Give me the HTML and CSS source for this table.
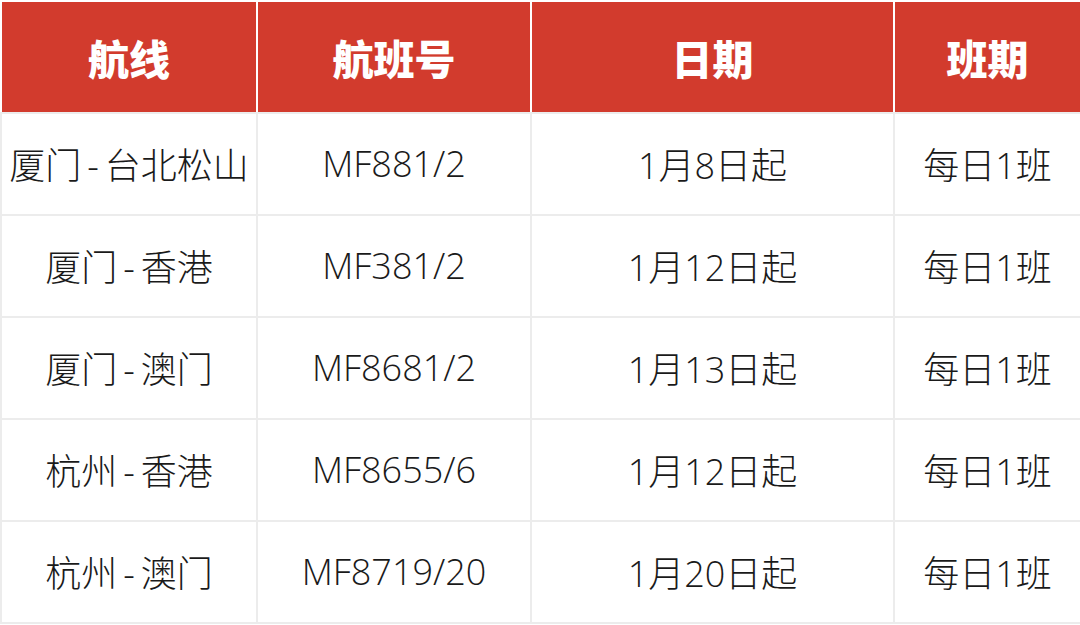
FILE: index.html
```html
<!DOCTYPE html>
<html lang="zh-CN">
<head>
<meta charset="utf-8">
<link rel="stylesheet" href="styles.css">
</head>
<body>
<table class="flights">
  <colgroup>
    <col class="c1"><col class="c2"><col class="c3"><col class="c4">
  </colgroup>
  <thead>
    <tr><th>航线</th><th>航班号</th><th>日期</th><th>班期</th></tr>
  </thead>
  <tbody>
    <tr><td>厦门<span class="sep">-</span>台北松山</td><td>MF881/2</td><td>1月8日起</td><td>每日1班</td></tr>
    <tr><td>厦门<span class="sep">-</span>香港</td><td>MF381/2</td><td>1月12日起</td><td>每日1班</td></tr>
    <tr><td>厦门<span class="sep">-</span>澳门</td><td>MF8681/2</td><td>1月13日起</td><td>每日1班</td></tr>
    <tr><td>杭州<span class="sep">-</span>香港</td><td>MF8655/6</td><td>1月12日起</td><td>每日1班</td></tr>
    <tr><td>杭州<span class="sep">-</span>澳门</td><td>MF8719/20</td><td>1月20日起</td><td>每日1班</td></tr>
  </tbody>
</table>
</body>
</html>
```
FILE: styles.css
```css
html, body {
  margin: 0;
  padding: 0;
  background: #ffffff;
}
.flights {
  border-collapse: collapse;
  table-layout: fixed;
  width: 1080px;
  color: #1a1a1a;
}
.c1 { width: 256px; }
.c2 { width: 274px; }
.c3 { width: 363px; }
.c4 { width: 187px; }
.flights th {
  background: #d23b2d;
  color: #ffffff;
  font-family: "Noto Sans CJK SC", "Noto Sans", sans-serif;
  font-size: 41px;
  font-weight: 900;
  height: 110px;
  padding: 0;
  border: 2px solid #ffffff;
  border-bottom-color: #ececec;
  text-align: center;
  vertical-align: middle;
}
.flights td {
  font-family: "Open Sans", "Noto Sans CJK SC", sans-serif;
  font-size: 36px;
  font-weight: 300;
  height: 98px;
  padding: 0 0 2px;
  border: 2px solid #ececec;
  text-align: center;
  vertical-align: middle;
  white-space: nowrap;
}
.sep {
  margin: 0 6px;
}
```
